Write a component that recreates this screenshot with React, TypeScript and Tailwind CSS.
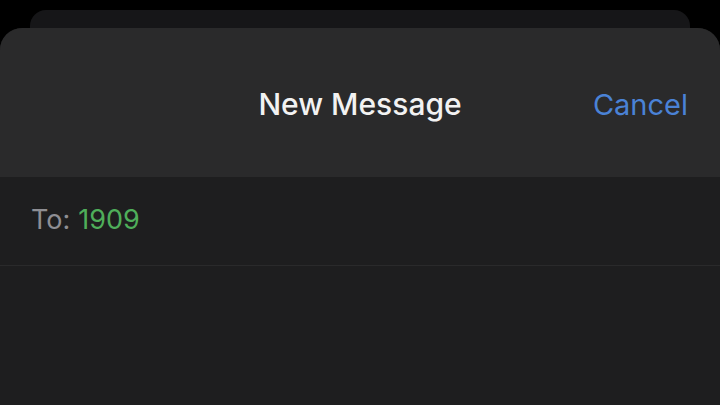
export default function App() {
  return (
    <div className="w-[720px] h-[405px] bg-black overflow-hidden flex flex-col" style={{ fontFamily: 'Inter, "Liberation Sans", sans-serif' }}>
      <div className="mt-[10px] mx-[30px] h-[30px] rounded-t-[16px] bg-[#161618] shrink-0" />
      <div className="-mt-[12px] flex-1 rounded-t-[22px] bg-[#1e1e1f] flex flex-col overflow-hidden">
        <div className="h-[149px] bg-[#2a2a2b] relative flex items-center justify-center shrink-0 pt-[4px]">
          <span className="text-[30px] font-medium text-[#f2f2f2] tracking-[0px]">New Message</span>
          <span className="absolute right-[32px] top-1/2 -translate-y-1/2 mt-[2px] text-[29px] text-[#4a82d6]">Cancel</span>
        </div>
        <div className="h-[89px] flex items-center px-[31px] border-b border-[#2a2a2b] shrink-0 pb-[2px]">
          <span className="text-[27px] text-[#8e8e93]">To:</span>
          <span className="text-[27px] text-[#4fae5a] ml-[8px]">1909</span>
        </div>
      </div>
    </div>
  );
}
